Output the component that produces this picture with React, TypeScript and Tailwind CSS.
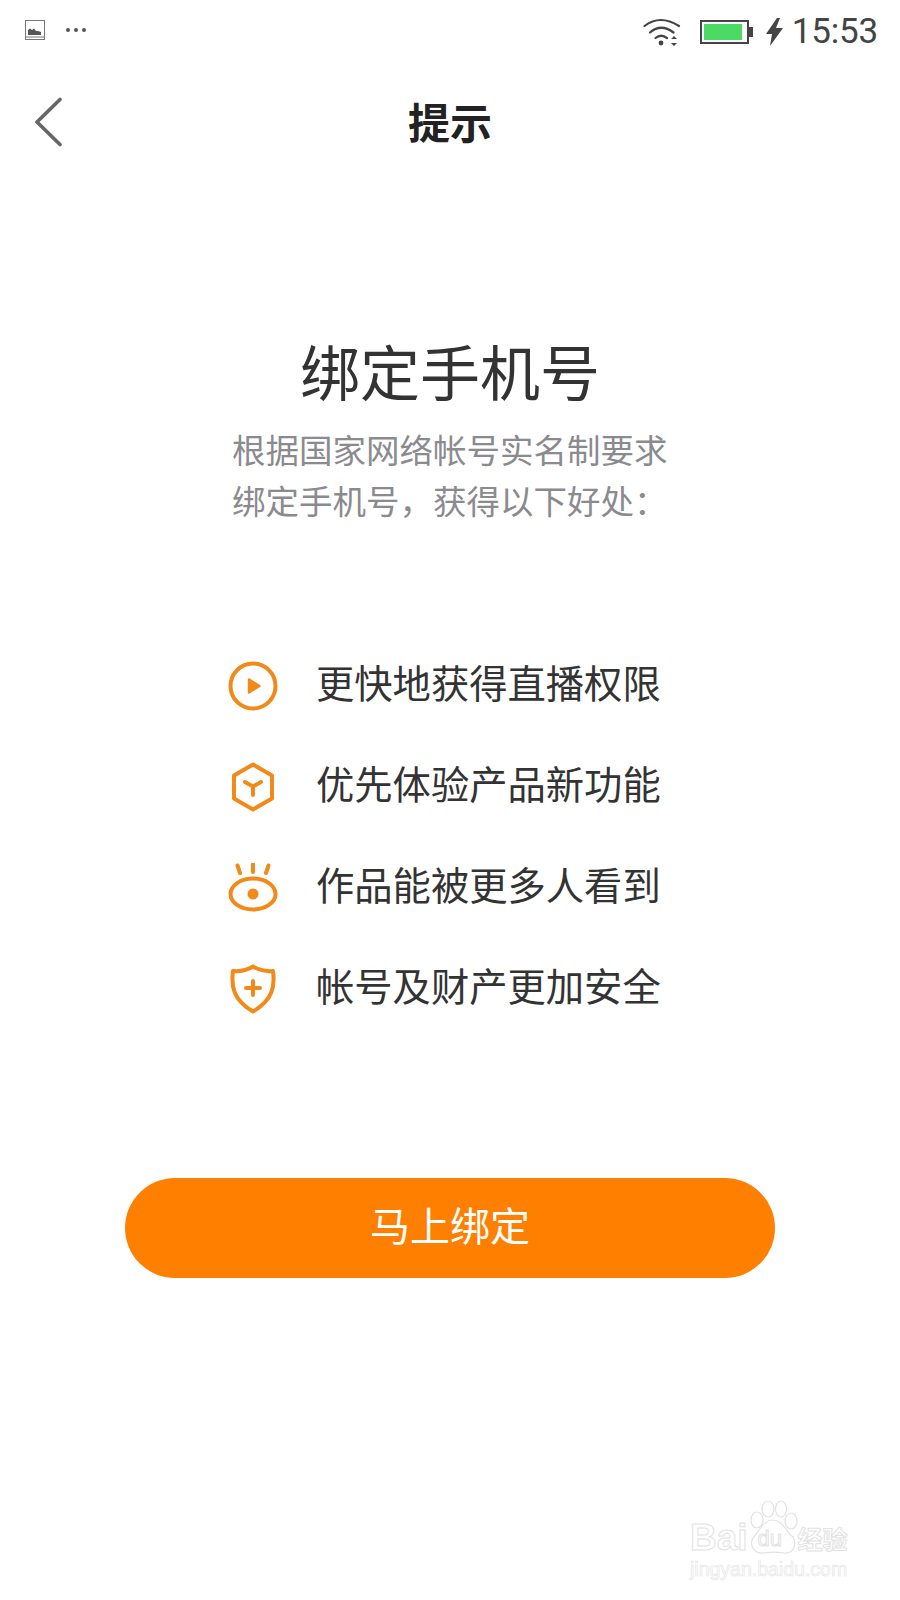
const benefits = [
  { label: "更快地获得直播权限", icon: <PlayIcon /> },
  { label: "优先体验产品新功能", icon: <HexIcon /> },
  { label: "作品能被更多人看到", icon: <EyeIcon /> },
  { label: "帐号及财产更加安全", icon: <ShieldIcon /> },
];

function PlayIcon() {
  return (
    <svg width="50" height="50" viewBox="0 0 50 50" fill="none" stroke="#f28a1a" strokeWidth="4">
      <circle cx="25" cy="25" r="22.5" />
      <path d="M21 18.5 L31.5 25 L21 31.5 Z" fill="#f28a1a" strokeLinejoin="round" strokeWidth="2.4" />
    </svg>
  );
}

function HexIcon() {
  return (
    <svg width="50" height="50" viewBox="0 0 50 50" fill="none" stroke="#f28a1a" strokeWidth="4" strokeLinejoin="round">
      <path d="M25 2.5 L44 13.5 V36.5 L25 47.5 L6 36.5 V13.5 Z" />
      <path d="M17 20 L25 24.5 L33 20 M25 24.5 V33" strokeLinecap="round" strokeWidth="4" />
    </svg>
  );
}

function EyeIcon() {
  return (
    <svg width="50" height="50" viewBox="0 0 50 50" fill="none" stroke="#f28a1a" strokeWidth="4" strokeLinecap="round">
      <path d="M9.5 2.5 L12 10 M25 1 V9 M40.5 2.5 L38 10" />
      <ellipse cx="25" cy="31" rx="22.5" ry="15.5" />
      <circle cx="25" cy="31" r="5.5" fill="#f28a1a" stroke="none" />
    </svg>
  );
}

function ShieldIcon() {
  return (
    <svg width="50" height="50" viewBox="0 0 50 50" fill="none" stroke="#f28a1a" strokeWidth="4" strokeLinejoin="round">
      <path d="M5 7 Q16 8 25 2.5 Q34 8 45 7 C47 22 45 36 25 47.5 C5 36 3 22 5 7 Z" />
      <path d="M25 17 V31 M18 24 H32" strokeLinecap="round" strokeWidth="4" />
    </svg>
  );
}

function StatusBar() {
  return (
    <div className="flex h-[60px] items-center justify-between pl-[25px] pr-[22px]">
      <div className="flex items-center gap-[21px]">
        <svg width="20" height="20" viewBox="0 0 20 20" fill="none">
          <rect x="0.5" y="0.5" width="19" height="19" stroke="#777" />
          <path d="M3 15 V10 L5 8.5 L7 10 L9 8.5 L11 11 L13 11 L16 12 V15 Z" fill="#555" />
          <path d="M1 17 H19" stroke="#777" />
        </svg>
        <div className="flex gap-[4px]">
          <span className="h-[4px] w-[4px] rounded-full bg-[#555]" />
          <span className="h-[4px] w-[4px] rounded-full bg-[#555]" />
          <span className="h-[4px] w-[4px] rounded-full bg-[#555]" />
        </div>
      </div>
      <div className="flex items-center pt-[3px]">
        <svg width="38" height="30" viewBox="0 0 38 30" fill="none" stroke="#444" strokeWidth="2.2" strokeLinecap="round">
          <path d="M1.5 9 Q17 -3 36 9" />
          <path d="M7 15.5 Q18 6 30.5 15.5" />
          <path d="M12.5 21 Q18 16.5 24 21" />
          <circle cx="18" cy="26" r="2.4" fill="#444" stroke="none" />
          <path d="M28 22 L31 19 L34 22 Z M28 26 L31 29 L34 26 Z" fill="#444" stroke="none" />
        </svg>
        <div className="ml-[19px] flex items-center">
          <div className="h-[24px] w-[49px] border-2 border-[#444] p-[2px]">
            <div className="h-full w-[38px] bg-[#4cd964]" />
          </div>
          <div className="h-[10px] w-[4px] bg-[#444]" />
        </div>
        <svg className="ml-[13px]" width="17" height="28" viewBox="0 0 17 28" fill="#444">
          <path d="M11 0 L0 16 H6 L4 28 L17 10 H10 L14 0 Z" />
        </svg>
        <span className="ml-[9px] font-['Roboto',sans-serif] text-[35px] leading-none tracking-[-0.2px] text-[#444]">15:53</span>
      </div>
    </div>
  );
}

function Watermark() {
  return (
    <div className="absolute left-[690px] top-[1500px] flex w-[160px] flex-col items-start text-white">
      <div className="flex items-end font-['Liberation_Sans',sans-serif] font-bold [-webkit-text-stroke:1px_#e2e2e2]">
        <span className="text-[37px] leading-none">Bai</span>
        <div className="relative h-[56px] w-[50px]">
          <svg width="50" height="56" viewBox="0 0 50 56" fill="none" stroke="#e2e2e2" strokeWidth="1.2">
            <ellipse cx="9" cy="20" rx="6" ry="8" />
            <ellipse cx="20" cy="9" rx="6" ry="8" />
            <ellipse cx="33" cy="9" rx="5.5" ry="8" />
            <ellipse cx="43" cy="21" rx="6" ry="8" />
            <path d="M25 20 C15 20 11 32 5 38 C1 46 6 54 16 53 C22 52 30 52 36 53 C46 54 49 44 45 37 C38 32 35 20 25 20 Z" />
          </svg>
          <span className="absolute bottom-[6px] left-[10px] text-[22px] font-normal leading-none">du</span>
        </div>
        <span className="font-['Noto_Sans_CJK_SC',sans-serif] text-[25px] leading-[36px]">经验</span>
      </div>
      <span className="mt-[4px] font-['Liberation_Sans',sans-serif] text-[19.5px] leading-none text-white [-webkit-text-stroke:0.7px_#e6e6e6]">jingyan.baidu.com</span>
    </div>
  );
}

export default function App() {
  return (
    <div className="relative h-[1600px] w-[900px] overflow-hidden bg-white font-['Noto_Sans_CJK_SC',sans-serif]">
      <StatusBar />

      <div className="relative flex h-[125px] items-center justify-center pb-[4px]">
        <svg className="absolute left-[34px] top-[37px]" width="30" height="50" viewBox="0 0 30 50" fill="none" stroke="#666" strokeWidth="3.6" strokeLinecap="round" strokeLinejoin="round">
          <path d="M26 2.5 L3 25 L26 47.5" />
        </svg>
        <h1 className="text-[42px] font-bold leading-none text-[#222]">提示</h1>
      </div>

      <div className="mt-[143px] flex flex-col items-center">
        <h2 className="text-[60px] font-normal leading-[84px] text-[#333]">绑定手机号</h2>
        <div className="mt-[11px] w-[436px] text-[33.5px] leading-[51px] text-[#8a8a8f]">
          <p className="whitespace-nowrap">根据国家网络帐号实名制要求</p>
          <p className="whitespace-nowrap">绑定手机号，获得以下好处：</p>
        </div>
      </div>

      <ul className="mt-[136px] flex flex-col gap-[51px] pl-[228px]">
        {benefits.map((b) => (
          <li key={b.label} className="flex h-[50px] items-center">
            {b.icon}
            <span className="ml-[38px] whitespace-nowrap pb-[8px] text-[38.3px] leading-none text-[#333]">{b.label}</span>
          </li>
        ))}
      </ul>

      <div className="mt-[164px] flex justify-center">
        <button className="h-[100px] w-[650px] rounded-full bg-[#ff8000] pb-[8px] text-[40px] text-white">马上绑定</button>
      </div>

      <Watermark />
    </div>
  );
}
